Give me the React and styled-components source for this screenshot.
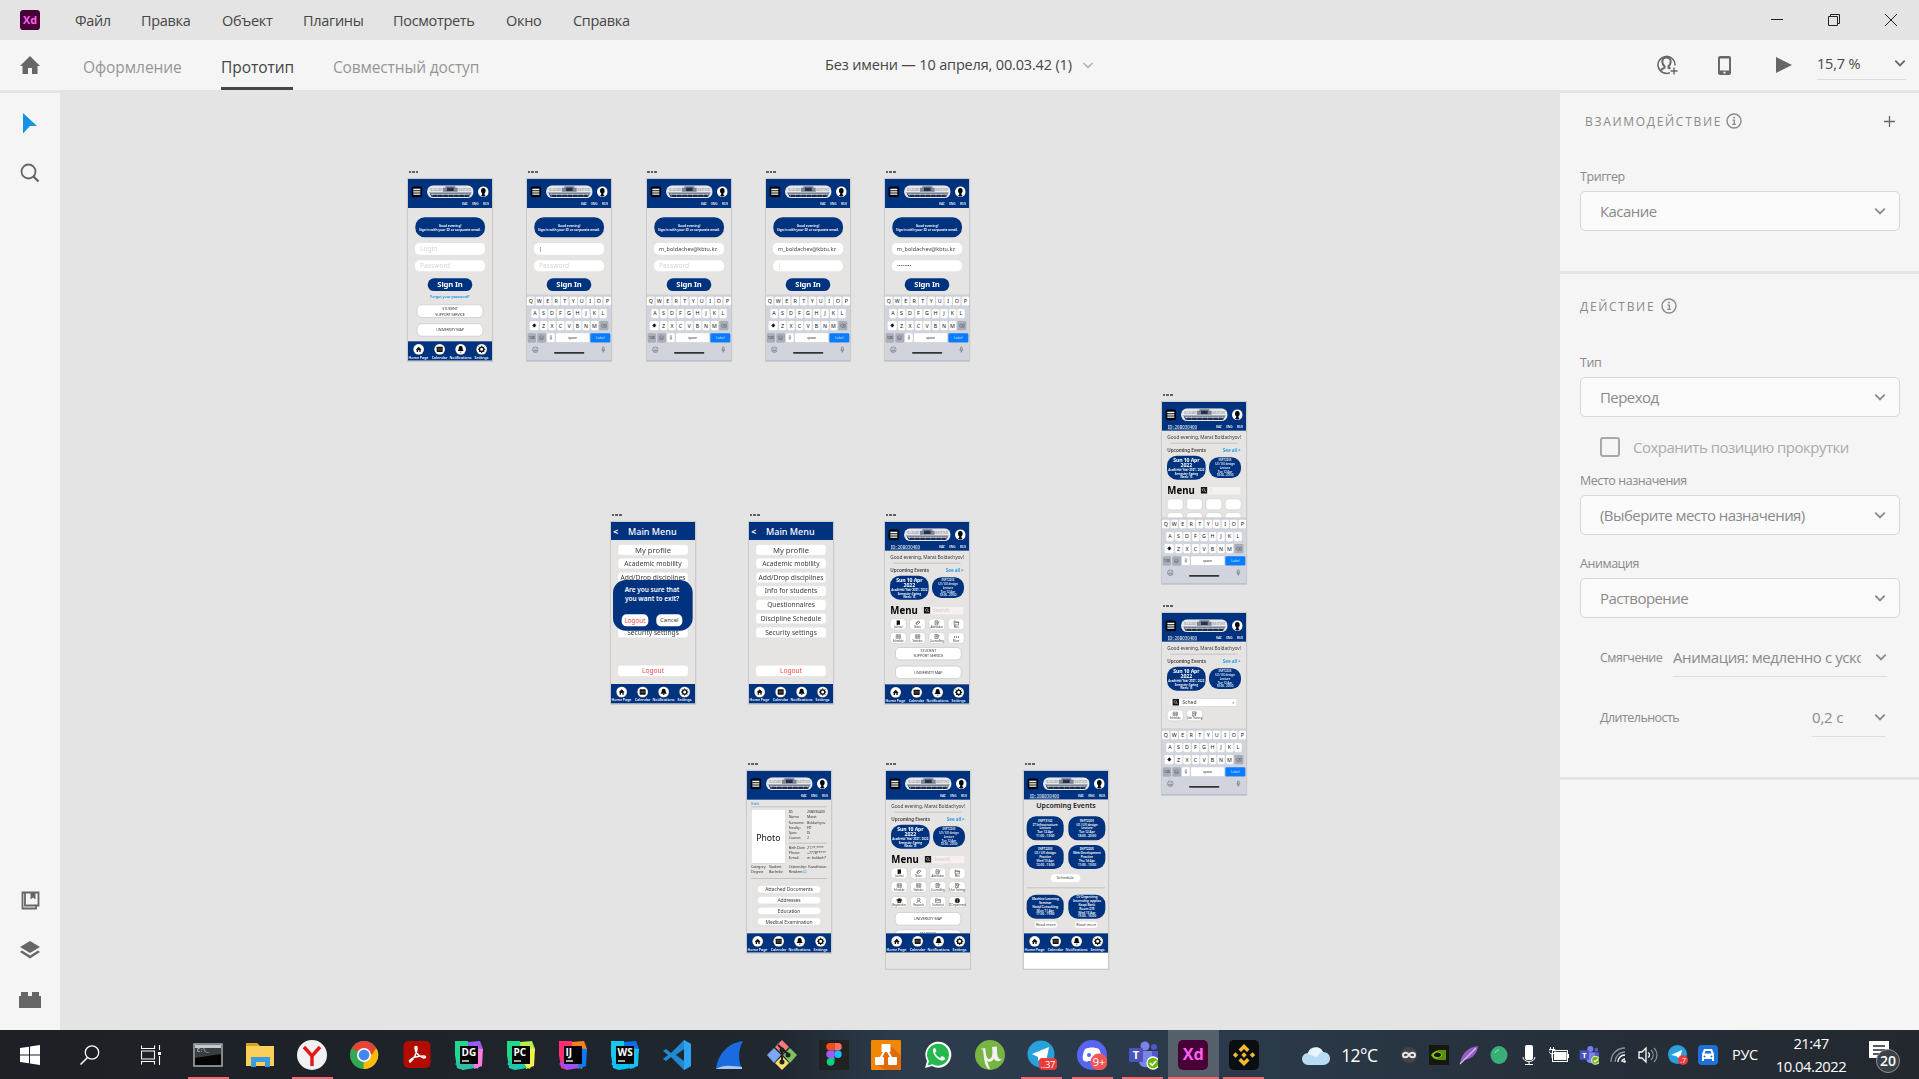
import React from 'react';
import styled, { createGlobalStyle, css } from 'styled-components';

const Global = createGlobalStyle`
  * { box-sizing: border-box; }
  body { margin: 0; background: #e4e4e4; overflow: hidden; }
  #root { font-family: "Open Sans", "Noto Sans", sans-serif; color: #464646; }
  svg { display: block; flex: none; }
`;

const Window = styled.div`
  width: 1919px;
  height: 1079px;
  display: flex;
  flex-direction: column;
  background: #e4e4e4;
`;

/* ---------- title bar ---------- */
const TitleBar = styled.header`
  height: 40px;
  display: flex;
  align-items: center;
  padding-left: 20px;
`;
const XdBadge = styled.div`
  width: ${(p) => p.$size}px;
  height: ${(p) => p.$size}px;
  border-radius: ${(p) => p.$size / 6}px;
  background: #470137;
  color: #ff61f6;
  font-size: ${(p) => p.$size * 0.54}px;
  font-weight: 700;
  display: flex;
  align-items: center;
  justify-content: center;
  line-height: 1;
`;
const MenuBar = styled.nav`
  display: flex;
  margin-left: 35px;
  padding-top: 2px;
  gap: 31px;
`;
const MenuItem = styled.span`
  font-size: 14.5px;
  letter-spacing: ${(p) => p.$track || 0}px;
  width: ${(p) => p.$w}px;
  white-space: nowrap;
  line-height: 20px;
`;
const WindowButtons = styled.div`
  margin-left: auto;
  padding-right: 21px;
  display: flex;
  gap: 43px;
`;

/* ---------- toolbar ---------- */
const Toolbar = styled.div`
  height: 50px;
  background: #f5f5f5;
  display: flex;
  align-items: center;
  padding-left: 20px;
`;
const Tabs = styled.div`
  display: flex;
  height: 50px;
  margin-left: 43px;
  gap: 40px;
`;
const Tab = styled.span`
  width: ${(p) => p.$w}px;
  font-size: 15.5px;
  letter-spacing: ${(p) => p.$track || 0}px;
  line-height: 54px;
  height: 50px;
  white-space: nowrap;
  color: ${(p) => (p.$on ? '#464646' : '#959595')};
  border-bottom: 3px solid ${(p) => (p.$on ? '#464646' : 'transparent')};
`;
const DocTitle = styled.div`
  margin-left: 346px;
  width: 263px;
  display: flex;
  align-items: center;
  justify-content: space-between;
  font-size: 14.5px;
  letter-spacing: -0.16px;
  white-space: nowrap;
  line-height: 52px;
  & > svg { margin-right: -6px; }
`;
const ToolbarRight = styled.div`
  margin-left: auto;
  display: flex;
  align-items: center;
  height: 50px;
`;
const Share = styled.div`margin-right: 40px;`;
const Device = styled.div`margin-right: 45px;`;
const Play = styled.div`margin-right: 25px;`;
const Zoom = styled.div`
  width: 89px;
  height: 30px;
  margin-right: 13px;
  border-bottom: 1px solid #dcdcdc;
  display: flex;
  align-items: center;
  justify-content: space-between;
  font-size: 14.5px;
  letter-spacing: -0.2px;
  padding-bottom: 3px;
`;

/* ---------- work area ---------- */
const Work = styled.div`
  height: 940px;
  padding-top: 3px;
  display: flex;
`;
const ToolRail = styled.aside`
  width: 60px;
  background: #f5f5f5;
  display: flex;
  flex-direction: column;
  align-items: center;
  padding: 20px 0 20px;
`;
const Spacer = styled.div`flex: 1;`;
const Tool = styled.div`
  height: 20px;
  margin-bottom: 30px;
  display: flex;
  align-items: center;
  &:last-child { margin-bottom: 0; }
`;
const Canvas = styled.main`
  position: relative;
  width: 1500px;
  overflow: hidden;
`;

/* ---------- property inspector ---------- */
const Inspector = styled.aside`
  width: 359px;
  background: #f5f5f5;
  color: #8a8a8a;
`;
const Section = styled.section`
  height: ${(p) => p.$h}px;
  border-bottom: 3px solid #e4e4e4;
  padding: 0 19px 0 20px;
  display: flex;
  flex-direction: column;
`;
const SectionHead = styled.div`
  margin-top: ${(p) => p.$mt}px;
  padding-left: ${(p) => p.$indent || 0}px;
  height: 20px;
  display: flex;
  align-items: center;
  gap: 9.5px;
  padding-right: 5px;
`;
const SectionTitle = styled.h2`
  margin: 0;
  width: ${(p) => p.$w}px;
  font-size: 12px;
  font-weight: 400;
  letter-spacing: ${(p) => p.$track}px;
  white-space: nowrap;
`;
const PlusSlot = styled.div`margin-left: auto;`;
const FieldLabel = styled.label`
  font-size: 12.5px;
  letter-spacing: -0.45px;
  line-height: 18px;
  margin-top: ${(p) => p.$mt}px;
  margin-bottom: 5px;
`;
const Select = styled.div`
  height: 40px;
  border: 1px solid #d8d8d8;
  border-radius: 5px;
  background: #fafafa;
  display: flex;
  align-items: center;
  justify-content: space-between;
  padding: 0 13px 0 19px;
  font-size: 15px;
  letter-spacing: -0.56px;
  line-height: 24px;
`;
const CheckRow = styled.div`
  display: flex;
  align-items: center;
  height: 22px;
  margin-top: 19px;
  padding-left: 20px;
  gap: 13px;
  color: #ababab;
  font-size: 15px;
  letter-spacing: -0.5px;
  white-space: nowrap;
`;
const Box = styled.span`
  width: 20px;
  height: 20px;
  border: 2px solid #a8a8a8;
  border-radius: 3px;
`;
const InlineRow = styled.div`
  display: flex;
  justify-content: space-between;
  height: 39px;
  margin-top: ${(p) => p.$mt}px;
  padding: 0 ${(p) => p.$pr}px 0 20px;
  font-size: 12.5px;
  letter-spacing: ${(p) => p.$track}px;
  line-height: 39px;
`;
const InlineValue = styled.div`
  width: ${(p) => p.$w}px;
  border-bottom: 1px solid #dedede;
  display: flex;
  align-items: center;
  justify-content: space-between;
  font-size: 15px;
  letter-spacing: ${(p) => p.$track}px;
`;
const Clip = styled.span`
  width: ${(p) => p.$w}px;
  overflow: hidden;
  white-space: nowrap;
`;

const Chevron = ({ color = '#8a8a8a', w = 1.9, s = 12 }) => (
  <svg width={s} height={s} viewBox="0 0 12 12" fill="none" stroke={color} strokeWidth={w} strokeLinecap="round">
    <path d="M1.8 4.2 6 8.4l4.2-4.2" />
  </svg>
);
const Info = () => (
  <svg width="16" height="16" viewBox="0 0 16 16" fill="none" stroke="#8a8a8a">
    <circle cx="8" cy="8" r="7" strokeWidth="1.4" />
    <path d="M6.5 7.2H8.3V11.3M6.3 11.4H9.8" strokeWidth="1.3" />
    <circle cx="8" cy="4.6" r="0.6" fill="#8a8a8a" />
  </svg>
);

/* ---------- artboards ---------- */
const Board = styled.div`
  position: absolute;
  left: ${(p) => p.$x - 60}px;
  top: ${(p) => p.$y - 93}px;
`;
const BoardLabel = styled.div`
  position: absolute;
  left: 0.5px;
  top: -8px;
  display: flex;
  gap: 1px;
`;
const Pip = styled.i`
  width: 2.6px;
  height: 2.4px;
  background: #606060;
`;
const Frame = styled.div`
  width: 252px;
  height: ${(p) => p.$h || 545}px;
  transform: scale(0.33333);
  transform-origin: 0 0;
  background: ${(p) => p.$bg || '#e5e4e2'};
  box-shadow: 0 0 0 4px #cbcbcb;
  overflow: hidden;
  display: flex;
  flex-direction: column;
  color: #3c3c3c;
  font-family: "Noto Sans", "Open Sans", sans-serif;
`;
const Body = styled.div`
  flex: none;
  height: ${(p) => p.$h}px;
  overflow: hidden;
  display: flex;
  flex-direction: column;
`;
const Head = styled.div`
  flex: none;
  height: ${(p) => p.$h}px;
  background: #00337f;
  padding: 19px 10px 0 10px;
`;
const HeadRow = styled.div`
  display: flex;
  align-items: center;
  justify-content: space-between;
  height: 38px;
`;
const HeadSub = styled.div`
  display: flex;
  align-items: center;
  margin-top: 9px;
  height: 18px;
  padding-left: 7px;
  color: #d5deec;
  font-size: 10px;
  font-weight: 700;
`;
const UserId = styled.span`
  font-size: 13.5px;
  text-decoration: underline;
  white-space: nowrap;
  color: #b4c0d6;
  letter-spacing: -0.4px;
`;
const Langs = styled.div`
  margin-left: auto;
  width: 80px;
  display: flex;
  justify-content: space-between;
  letter-spacing: -1px;
`;
const Pill = styled.div`
  flex: none;
  align-self: center;
  margin-left: ${(p) => p.$ml || 0}px;
  margin-top: ${(p) => p.$mt || 0}px;
  width: ${(p) => p.$w}px;
  height: ${(p) => p.$h}px;
  border-radius: ${(p) => p.$r || 14}px;
  background: ${(p) => p.$bg || '#fff'};
  color: ${(p) => p.$c || '#3c3c3c'};
  font-size: ${(p) => p.$fs || 12}px;
  font-weight: ${(p) => p.$fw || 400};
  letter-spacing: ${(p) => p.$track || 0}px;
  line-height: ${(p) => p.$lh || 1.2};
  display: flex;
  flex-direction: column;
  align-items: ${(p) => (p.$left ? 'flex-start' : 'center')};
  justify-content: center;
  text-align: center;
  white-space: nowrap;
  padding: 0 ${(p) => (p.$left ? 15 : 0)}px;
  ${(p) => p.$line && css`border: 1.5px solid ${p.$line};`}
`;
const Line = styled.div`
  flex: none;
  height: 20px;
  margin-top: ${(p) => p.$mt || 0}px;
  padding: 0 ${(p) => p.$px || 16}px;
  display: flex;
  align-items: center;
  justify-content: ${(p) => p.$j || 'center'};
  font-size: ${(p) => p.$fs}px;
  font-weight: ${(p) => p.$fw || 400};
  letter-spacing: ${(p) => p.$track || 0}px;
  color: ${(p) => p.$c || '#3c3c3c'};
  white-space: nowrap;
`;
const Blue = styled.span`color: #1a93e8;`;
const Rule = styled.div`
  flex: none;
  height: 3px;
  background: #c2c2c0;
  margin: ${(p) => p.$mt || 0}px ${(p) => p.$mx || 12}px ${(p) => p.$mb || 0}px;
`;
const Foot = styled.div`
  flex: none;
  height: 58px;
  background: #00337f;
  display: flex;
  justify-content: space-around;
  padding: 7px 0 0;
`;
const FootItem = styled.div`
  width: 62px;
  display: flex;
  flex-direction: column;
  align-items: center;
  color: #eef2f8;
  font-size: 11px;
  font-weight: 600;
  line-height: 13px;
  letter-spacing: -0.2px;
  white-space: nowrap;
`;
const Cards = styled.div`
  flex: none;
  display: flex;
  justify-content: space-between;
  align-items: center;
  margin-top: ${(p) => p.$mt}px;
  padding: 0 ${(p) => p.$px || 15}px;
`;
const SearchField = styled.div`
  width: 97px;
  height: 23px;
  background: #f8efef;
  color: #ddd5d5;
  font-size: 15px;
  font-weight: 700;
  line-height: 22px;
  padding-left: 5px;
`;
const MenuTitle = styled.span`
  font-size: 29px;
  font-weight: 700;
  color: #000;
  width: 98px;
  line-height: 30px;
`;
const MenuRow = styled.div`
  flex: none;
  display: flex;
  align-items: center;
  height: 30px;
  margin-top: 17px;
  padding-left: 16px;
  gap: 2px;
`;
const Tiles = styled.div`
  flex: none;
  display: flex;
  gap: 9px;
  margin-top: ${(p) => p.$mt}px;
  padding-left: 15px;
`;
const Tile = styled.div`
  width: 49px;
  height: 34px;
  border-radius: 11px;
  border: 1.5px solid #aeaeac;
  background: #fff;
  display: flex;
  flex-direction: column;
  align-items: center;
  justify-content: center;
  font-size: 8px;
  line-height: 9px;
  white-space: nowrap;
  letter-spacing: -0.3px;
`;
const SearchBar = styled.div`
  flex: none;
  margin: 22px 0 0 23px;
  width: 203px;
  height: 26px;
  border: 2px solid #cfcfcf;
  background: #fff;
  display: flex;
  align-items: center;
  gap: 10px;
  padding: 0 6px;
  font-size: 15px;
`;
const Times = styled.span`margin-left: auto; font-size: 12px;`;

const Keyboard = styled.div`
  flex: none;
  height: 198px;
  background: #d1d4dc;
  border-top: 2px solid #c6c9d0;
  border-bottom: 2px solid #97a4c4;
  padding-top: 4px;
  display: flex;
  flex-direction: column;
`;
const KeyRow = styled.div`
  display: flex;
  justify-content: center;
  gap: 3.5px;
  margin-bottom: 8.5px;
`;
const Key = styled.div`
  width: ${(p) => p.$w || 22}px;
  height: 28px;
  border-radius: 4px;
  background: ${(p) => p.$bg || '#fff'};
  color: ${(p) => p.$c || '#111'};
  font-size: ${(p) => p.$fs || 16}px;
  border-bottom: 1.5px solid #a9acb4;
  display: flex;
  align-items: center;
  justify-content: center;
`;
const KeyFoot = styled.div`
  display: flex;
  justify-content: space-between;
  padding: 3px 17px 0 15px;
`;
const HomeBar = styled.div`
  width: 91px;
  height: 5px;
  border-radius: 3px;
  background: #333;
  align-self: center;
  margin-top: -3px;
`;
const MenuHead = styled.div`
  flex: none;
  height: 54px;
  background: #00337f;
  color: #fff;
  display: flex;
  align-items: center;
  padding: 4px 0 0 7px;
  font-size: 27px;
  font-weight: 500;
  white-space: nowrap;
`;
const Back = styled.span`width: 44px; font-weight: 700; font-size: 26px;`;
const MenuStack = styled.div`
  display: flex;
  flex-direction: column;
  gap: 8.3px;
  padding-top: 13px;
`;
const Modal = styled.div`
  position: absolute;
  left: 6px;
  top: 174px;
  width: 239px;
  height: 152px;
  border-radius: 38px;
  background: #00337f;
  color: #fff;
  font-size: 19.5px;
  font-weight: 600;
  line-height: 27px;
  text-align: center;
  padding: 16px 31px 0 26px;
`;
const ModalButtons = styled.div`
  display: flex;
  justify-content: space-between;
  margin-top: 33px;
`;
const Profile = styled.div`
  flex: none;
  display: flex;
  gap: 9px;
  padding: 0 12px;
  margin-top: 6px;
`;
const Photo = styled.div`
  width: 104px;
  height: 162px;
  background: #fff;
  border: 1.5px solid #b5b5b5;
  color: #111;
  font-size: 26px;
  display: flex;
  align-items: center;
  justify-content: center;
  padding-top: 8px;
`;
const Facts = styled.div`
  flex: 1;
  display: flex;
  flex-direction: column;
`;
const Fact = styled.div`
  display: grid;
  grid-template-columns: ${(p) => p.$cols || '55px 1fr'};
  height: 15.3px;
  line-height: 15px;
  font-size: 11px;
  letter-spacing: -0.5px;
  white-space: nowrap;
`;
const FactPad = styled.div`flex: none; padding: 1px 12px 0;`;

const Stripe = () => (
  <svg width="140" height="38" viewBox="0 0 140 38">
    <rect width="140" height="38" rx="19" fill="#e6e7ea" />
    <path d="M8 24h124l-6 11H14z" fill="#1d2b4a" />
    <path d="M6 20h128v4H6z" fill="#aab0bd" />
    <path d="M16 20v14M32 20v14M48 20v14M64 20v14M80 20v14M96 20v14M112 20v14M126 20v14" stroke="#9aa2b2" strokeWidth="1.5" />
    <path d="M12 27h116" stroke="#dfe1e6" strokeWidth="2.5" />
    <path d="M48 7h7V3h30v4h7v12H48z" fill="#7b8394" />
    <rect x="60" y="7" width="20" height="10" fill="#26324c" />
    <text x="28" y="17" fontSize="9" fontFamily="Liberation Serif" fill="#777" textAnchor="middle" textLength="36">KAZAKH</text>
    <text x="113" y="17" fontSize="9" fontFamily="Liberation Serif" fill="#777" textAnchor="middle" textLength="38">BRITISH</text>
  </svg>
);
const Burger = () => (
  <svg width="33" height="33" viewBox="0 0 33 33">
    <rect width="33" height="33" rx="8" fill="#02040a" />
    <path d="M6 9.500h21M6 16.500h21M6 23.500h21" stroke="#fff" strokeWidth="3.800" />
  </svg>
);
const Avatar = () => (
  <svg width="32" height="32" viewBox="0 0 32 32">
    <circle cx="16" cy="16" r="16" fill="#fff" />
    <path d="M16 5c5 0 7 4 7 8 0 4-2 7-3.500 8v4c3 1 3 2 2 4-4 2-7 2-11 0-1-2-1-3 2-4v-4C11 20 9 17 9 13c0-4 2-8 7-8z" fill="#05070c" />
  </svg>
);
const Magnifier = () => (
  <svg width="20" height="20" viewBox="0 0 20 20">
    <rect width="20" height="20" fill="#151515" />
    <circle cx="9" cy="8.500" r="4" fill="none" stroke="#ddd" strokeWidth="1.600" />
    <path d="m12 11.500 4 4" stroke="#ddd" strokeWidth="2" />
  </svg>
);

const Header = ({ id, h = 87 }) => (
  <Head $h={h}>
    <HeadRow><Burger /><Stripe /><Avatar /></HeadRow>
    <HeadSub>
      {id && <UserId>ID: 20B030400</UserId>}
      <Langs><span>KAZ</span><span>ENG</span><span>RUS</span></Langs>
    </HeadSub>
  </Head>
);

const footIcons = {
  home: <path d="M8 18 17 9l9 9h-3v7h-4v-5h-4v5h-4v-7z" fill="#111" />,
  cal: <g><rect x="8" y="9" width="18" height="16" rx="2" fill="#111" /><path d="M11 15h12M11 19h12" stroke="#888" strokeWidth="1.500" /></g>,
  bell: <path d="M17 7c5 0 6 4 6 8 0 3 2 5 3 7H8c1-2 3-4 3-7 0-4 1-8 6-8zM14 24h6c0 3-6 3-6 0z" fill="#050505" />,
  gear: <g><circle cx="17" cy="17" r="6.500" fill="none" stroke="#111" strokeWidth="4" /><path d="M17 6v4M17 24v4M6 17h4M24 17h4M9 9l3 3M22 22l3 3M25 9l-3 3M12 22l-3 3" stroke="#111" strokeWidth="3" /></g>,
};
const Footer = () => (
  <Foot>
    {[['home', 'Home Page'], ['cal', 'Calendar'], ['bell', 'Notifications'], ['gear', 'Settings']].map(([k, t]) => (
      <FootItem key={k}>
        <svg width="34" height="34" viewBox="0 0 34 34"><circle cx="17" cy="17" r="16.500" fill="#fff" stroke="#111" />{footIcons[k]}</svg>
        {t}
      </FootItem>
    ))}
  </Foot>
);

const Smile = ({ s = 20 }) => (
  <svg width={s} height={s} viewBox="0 0 20 20" fill="none" stroke="#5b5e66" strokeWidth="1.600">
    <circle cx="10" cy="10" r="8.500" /><path d="M5 11.500c2 4.500 8 4.500 10 0zM7 6v2M13 6v2" />
  </svg>
);
const MicKey = ({ s = 20 }) => (
  <svg width={s * 0.6} height={s} viewBox="0 0 12 20" fill="none" stroke="#555" strokeWidth="1.600">
    <rect x="3.500" y="1.500" width="5" height="10" rx="2.500" /><path d="M1 9c0 7 10 7 10 0M6 14v5" />
  </svg>
);
const Keys = () => (
  <Keyboard>
    <KeyRow>{'QWERTYUIOP'.split('').map((k) => <Key key={k}>{k}</Key>)}</KeyRow>
    <KeyRow>{'ASDFGHJKL'.split('').map((k) => <Key key={k}>{k}</Key>)}</KeyRow>
    <KeyRow>
      <Key $w={27}><svg width="14" height="13" viewBox="0 0 14 13"><path d="M7 0l7 7h-4v5H4V7H0z" fill="#111" /></svg></Key>
      {'ZXCVBNM'.split('').map((k) => <Key key={k}>{k}</Key>)}
      <Key $w={27} $bg="#a9adb8"><svg width="17" height="12" viewBox="0 0 17 12" fill="none" stroke="#444" strokeWidth="1.400"><path d="M5 1h11v10H5L1 6zM8 4l5 4M13 4 8 8" /></svg></Key>
    </KeyRow>
    <KeyRow>
      <Key $w={25} $bg="#a9adb8" $fs={10}>123</Key>
      <Key $w={26} $bg="#a9adb8"><Smile s={15} /></Key>
      <Key $w={23}><MicKey s={16} /></Key>
      <Key $w={100} $fs={10}>space</Key>
      <Key $w={60} $bg="#0a7cff" $c="#cfe4ff" $fs={10}>Label</Key>
    </KeyRow>
    <KeyFoot><Smile /><MicKey /></KeyFoot>
    <HomeBar />
  </Keyboard>
);

const Artboard = ({ x, y, h, bg, children }) => (
  <Board $x={x} $y={y}>
    <BoardLabel><Pip /><Pip /><Pip /></BoardLabel>
    <Frame $h={h} $bg={bg}>{children}</Frame>
  </Board>
);

const Login = ({ x, login, pass, dim, keyboard }) => (
  <Artboard x={x} y={179}>
    <Header />
    <Body $h={keyboard ? 260 : 400}>
      <Pill $mt={28} $w={209} $h={60} $r={28} $bg="#00337f" $c="#e8edf6" $fs={10} $fw={700} $track={-0.25}>
        <span>Good evening!</span><span>Sign in with your ID or corporate email.</span>
      </Pill>
      <Pill $mt={17} $w={210} $h={35} $left $c={dim && dim[0] ? '#d6d6d6' : '#3c3c3c'} $fs={login === 'Login' ? 20 : 16} $track={login.length > 9 ? 0.35 : 0}>
        {login}
      </Pill>
      <Pill $mt={17} $w={210} $h={33} $left $c={dim && dim[1] ? '#d6d6d6' : '#222'} $fs={20}>{pass}</Pill>
      <Pill $mt={21} $w={134} $h={38} $r={19} $bg="#00337f" $c="#fff" $fs={23} $fw={700} $track={-0.4}>Sign In</Pill>
      {!keyboard && (
        <>
          <Line $mt={7} $fs={11} $fw={600} $track={-0.2}><Blue>Forgot your password?</Blue></Line>
          <Pill $mt={14} $w={198} $h={39} $line="#999" $fs={11} $lh={1.6} $track={-0.4}><span>STUDENT</span><span>SUPPORT SERVICE</span></Pill>
          <Pill $mt={18} $w={198} $h={38} $line="#999" $fs={11} $track={-0.4}>UNIVERSITY MAP</Pill>
        </>
      )}
    </Body>
    {keyboard ? <Keys /> : <Footer />}
  </Artboard>
);

const items = ['My profile', 'Academic mobility', 'Add/Drop disciplines', 'Info for students', 'Questionnaires', 'Discipline Schedule', 'Security settings'];
const MainMenu = ({ x, modal }) => (
  <Artboard x={x} y={522}>
    <MenuHead><Back>&lt;</Back>Main Menu</MenuHead>
    <Body $h={432}>
      <MenuStack>
        {items.map((t, i) => <Pill key={t} $w={212} $h={33} $r={10} $fs={i ? 20 : 23} $line="#d6d6d4">{t}</Pill>)}
      </MenuStack>
      <Pill $mt={81} $w={212} $h={35} $r={10} $fs={20} $c="#f04848" $line="#d6d6d4">Logout</Pill>
    </Body>
    <Footer />
    {modal && (
      <Modal>
        Are you sure that<br />you want to exit?
        <ModalButtons>
          <Pill $w={80} $h={36} $fs={19} $c="#f04848">Logout</Pill>
          <Pill $w={78} $h={36} $fs={18}>Cancel</Pill>
        </ModalButtons>
      </Modal>
    )}
  </Artboard>
);

const tileInk = { width: 18, height: 16, viewBox: '0 0 18 16', fill: 'none', stroke: '#444', strokeWidth: 1.8 };
const tileArt = {
  book: <svg {...tileInk}><path d="M4 0h10v15l-3-3-3 3H4z" fill="#111" stroke="none" /></svg>,
  clip: <svg {...tileInk}><path d="m4 11 8-8 4 2-8 8zM2 9l9-7" /></svg>,
  note: <svg {...tileInk}><path d="M3 1h9v13H3zM5 5h5M5 8h4M9 11l7-8" /></svg>,
  folder: <svg {...tileInk}><path d="M2 14V2h5l2 3h7v9zM2 7h14" /></svg>,
  grid: <svg {...tileInk} stroke="#777"><path d="M2 2h14v11H2zM2 6h14M2 9h14M6 2v11M12 2v11" /></svg>,
  more: <svg {...tileInk}><path d="M2 9h3M8 9h3M14 9h3" strokeWidth="3.500" stroke="#111" /></svg>,
  person: <svg {...tileInk}><circle cx="9" cy="5" r="4" /><path d="M3 15c0-7 12-7 12 0" /></svg>,
  cap: <svg {...tileInk}><path d="m0 6 9-5 9 5-9 5zM4 9v5h10V9" fill="#111" /></svg>,
  info: <svg {...tileInk}><circle cx="9" cy="8" r="7" fill="#111" /><path d="M9 7v5M9 3v2" stroke="#fff" /></svg>,
};
const rows = [
  [['book', 'Journal'], ['clip', 'News'], ['note', 'Attestation'], ['folder', 'Files']],
  [['grid', 'Schedule'], ['grid', 'Statistics'], ['note', 'Counselling'], ['more', 'More']],
];
const tallRows = [
  rows[0],
  [['grid', 'Schedule'], ['grid', 'Statistics'], ['note', 'Counselling'], ['note', 'User Training']],
  [['cap', 'Registration'], ['person', 'Requests'], ['folder', 'Transcript'], ['info', 'IT Department']],
];
const TileRow = ({ row, mt, blank }) => (
  <Tiles $mt={mt}>
    {row.map(([k, t]) => <Tile key={t}>{!blank && <>{tileArt[k]}<span>{t}</span></>}</Tile>)}
  </Tiles>
);

const Big = styled.span`
  font-size: 15.5px;
  font-weight: 700;
  line-height: 17px;
  border-bottom: 1px solid #8ea4c8;
`;
const Home = ({ x, y, h, tall, mode }) => (
  <Artboard x={x} y={y} h={h}>
    <Header id={!tall} h={86} />
    <Body $h={mode ? 261 : 401}>
      <Line $mt={10} $fs={14.300} $j="space-between" $track={-0.15}>Good evening, Marat Boldachyov!</Line>
      <Rule $mt={6} $mx={25} />
      <Line $mt={8} $fs={14} $fw={600} $j="space-between" $track={-0.2}><span>Upcoming Events</span><Blue>See all &gt;</Blue></Line>
      <Cards $mt={8}>
        <Pill $w={116} $h={72} $r={30} $bg="#00337f" $c="#fff" $fs={9} $fw={600} $track={-0.3} $lh={1.1}>
          <Big>Sun 10 Apr<br />2022</Big>
          <span>Academic Year 2021 - 2022</span><span>Semester: Spring</span><span>Week: 13</span>
        </Pill>
        <Pill $w={96} $h={62} $r={28} $bg="#00337f" $c="#dfe6f2" $fs={9} $fw={600} $track={-0.3} $lh={1.25}>
          <span>INFT2203</span><span>UI / UX design</span><span>Lecture</span><span>Tue 12 Apr</span><span>18:00 - 20:00</span>
        </Pill>
      </Cards>
      {mode === 'results' ? (
        <>
          <SearchBar><Magnifier />Sched<Times>×</Times></SearchBar>
          <TileRow mt={9} row={[['grid', 'Schedule'], ['note', 'User Training']]} />
        </>
      ) : (
        <>
          <MenuRow><MenuTitle>Menu</MenuTitle><Magnifier /><SearchField>{mode ? '|' : 'Search'}</SearchField></MenuRow>
          {(tall ? tallRows : rows).map((r, i) => <TileRow key={i} row={r} mt={[10, 7, 11][i]} blank={mode === 'typing'} />)}
          {!mode && !tall && (
            <>
              <Pill $mt={11} $w={198} $h={38} $line="#999" $ml={8} $fs={11} $lh={1.35} $track={-0.3}><span>STUDENT</span><span>SUPPORT SERVICE</span></Pill>
              <Pill $mt={18} $w={198} $h={38} $line="#999" $ml={8} $fs={11} $track={-0.3}>UNIVERSITY MAP</Pill>
            </>
          )}
          {tall && (
            <>
              <Pill $mt={14} $w={198} $h={39} $line="#999" $fs={11} $track={-0.3}>UNIVERSITY MAP</Pill>
              <Pill $mt={13} $w={198} $h={39} $line="#999" $fs={11}><span>STUDENT</span><span>SUPPORT SERVICE</span></Pill>
            </>
          )}
        </>
      )}
    </Body>
    {mode ? <Keys /> : <Footer />}
  </Artboard>
);

const ProfilePage = () => (
  <Artboard x={747.3} y={771}>
    <Header h={86} />
    <Body $h={401}>
      <Line $fs={13} $px={13} $j="flex-start"><Blue>Edit</Blue></Line>
      <Rule />
      <Profile>
        <Photo>Photo</Photo>
        <Facts>
          <Fact><span>ID:</span><span>20B030400</span></Fact>
          <Fact><span>Name:</span><span>Marat</span></Fact>
          <Fact><span>Surname:</span><span>Boldachyov</span></Fact>
          <Fact><span>Faculty:</span><span>FIT</span></Fact>
          <Fact><span>Spec:</span><span>IS</span></Fact>
          <Fact><span>Course:</span><span>2</span></Fact>
          <Rule $mt={8} $mx={0.1} $mb={5} />
          <Fact><span>Birth Date:</span><span>21.**.****</span></Fact>
          <Fact><span>Phone:</span><span>+7778*****</span></Fact>
          <Fact><span>E-mail:</span><span>m_boldach*</span></Fact>
        </Facts>
      </Profile>
      <FactPad>
        <Fact $cols="54px 59px 59px 1fr"><span>Category:</span><span>Student</span><span>Citizenship:</span><span>Kazakhstan</span></Fact>
        <Fact $cols="54px 59px 42px 1fr"><span>Degree:</span><span>Bachelor</span><span>Resident</span><Blue>☑</Blue></Fact>
      </FactPad>
      <Rule $mt={12} />
      {['Attached Documents', 'Addresses', 'Education', 'Medical Examination'].map((t, i) => (
        <Pill key={t} $mt={i ? 9.300 : 20} $w={191} $h={23} $r={12} $fs={15} $track={-0.3} $line="#d2d2d0">{t}</Pill>
      ))}
    </Body>
    <Footer />
  </Artboard>
);

const EventCard = ({ lines }) => (
  <Pill $w={111} $h={72} $r={28} $bg="#00337f" $c="#eef2f8" $fs={10} $fw={600} $track={-0.4} $lh={1.15}>
    {lines.map((l) => <span key={l}>{l}</span>)}
  </Pill>
);
const EventsBody = styled(Body)`background: #e5e4e2;`;
const EventsPage = () => (
  <Artboard x={1024.3} y={771} h={593} bg="#fff">
    <Header id h={86} />
    <EventsBody $h={401}>
      <Line $mt={8} $fs={21} $fw={600} $c="#222">Upcoming Events</Line>
      <Cards $mt={22} $px={8}>
        <EventCard lines={['INFT3102', 'IT Infrastructure', 'Lecture', 'Tue 12 Apr', '11:00 - 13:00']} />
        <EventCard lines={['INFT2203', 'UI / UX design', 'Lecture', 'Tue 12 Apr', '18:00 - 20:00']} />
      </Cards>
      <Cards $mt={14} $px={8}>
        <EventCard lines={['INFT2203', 'UI / UX design', 'Practice', 'Wed 13 Apr', '12:00 - 13:00']} />
        <EventCard lines={['INFT2205', 'Web Development', 'Practice', 'Thu 14 Apr', '11:00 - 13:00']} />
      </Cards>
      <Pill $mt={14} $ml={-4} $w={93} $h={27} $line="#ccc" $fs={12}>Schedule</Pill>
      <Rule $mt={14} $mx={9} />
      <Cards $mt={19} $px={8}>
        <EventCard lines={['Machine Learning', 'Seminar', 'Naiqil Consulting', 'Mon 11 Apr', '17:00 - 19:00']} />
        <EventCard lines={['CV Organizing', 'Internship, applies', 'Kaspi Bank', 'Room 278', 'Wed 13 Apr', '15:00 - 16:00']} />
      </Cards>
      <Cards $mt={7} $px={30}>
        <Pill $w={71} $h={22} $line="#ccc" $fs={12} $track={-0.2}>Read more</Pill>
        <Pill $w={71} $h={22} $line="#ccc" $fs={12} $track={-0.2}>Read more</Pill>
      </Cards>
    </EventsBody>
    <Footer />
  </Artboard>
);

/* ---------- taskbar ---------- */
const TaskBar = styled.footer`
  height: 49px;
  display: flex;
  color: #fff;
  background: linear-gradient(90deg, #1d2126 0, #1e2329 400px, #20272f 780px, #2d3c4c 900px, #2b3a4a 1250px, #26303b 1550px, #23282e 1919px);
`;
const Slot = styled.div`
  width: ${(p) => p.$w}px;
  height: 49px;
  display: flex;
  align-items: center;
  justify-content: center;
  background: ${(p) => (p.$on ? '#56606b' : 'transparent')};
  ${(p) => p.$run && css`
    background-image: linear-gradient(#ee6a73, #ee6a73);
    background-size: ${p.$on ? '100%' : '41px'} 2px;
    background-position: bottom;
    background-repeat: no-repeat;
  `}
`;
const Tray = styled.div`
  display: flex;
  align-items: center;
  margin-left: 33px;
`;
const Weather = styled.div`
  width: 92px;
  display: flex;
  align-items: center;
  gap: 11px;
  font-size: 17.5px;
  letter-spacing: -0.6px;
  padding-top: 1px;
`;
const TrayCell = styled.div`
  width: 29.9px;
  display: flex;
  justify-content: center;
`;
const Lang = styled.span`
  margin-left: 9px;
  width: 41px;
  font-size: 14.5px;
  letter-spacing: -0.3px;
`;
const Clock = styled.div`
  width: 76px;
  text-align: center;
  font-size: 14.8px;
  letter-spacing: -0.5px;
  line-height: 23px;
  white-space: nowrap;
`;
const Notice = styled.div`
  margin-left: 18px;
  width: 46px;
`;

const jet = {
  DG: ['#22d88f', '#9b5cf5', '#fa7ae0', '#2cc0a8'],
  PC: ['#21d789', '#b8f04a', '#f6f04a', '#20c8b0'],
  IJ: ['#fe2d70', '#fc801d', '#0e7cf5', '#a050f0'],
  WS: ['#19c7ee', '#0e70e8', '#18c0f0', '#07c3f2'],
};
const Jet = ({ k }) => (
  <svg width="30" height="30" viewBox="0 0 30 30">
    <path d="M1 1h13l2 14L9 30 3 28 1 15z" fill={jet[k][0]} />
    <path d="M14 2 26 1l3 8-5 20-9-4z" fill={jet[k][1]} />
    <path d="m17 8 12 1-1 17-8 3z" fill={jet[k][2]} />
    <path d="m1 24 12-8 8 12-12 2z" fill={jet[k][3]} />
    <rect x="6" y="6" width="18" height="18" fill="#050505" />
    <text x="7.500" y="15.500" fontSize="10" fontWeight="700" fontFamily="Open Sans" fill="#fff">{k}</text>
    <path d="M8 21h7" stroke="#fff" strokeWidth="1.300" />
  </svg>
);
const I = ({ children, s = 30, v = 30 }) => <svg width={s} height={s} viewBox={`0 0 ${v} ${v}`}>{children}</svg>;

const TeamsMark = () => (
  <>
    <circle cx="17" cy="6" r="4.500" fill="#7b83eb" /><circle cx="26" cy="7" r="3" fill="#5059c9" />
    <path d="M11 11h13v11c0 7-12 7-13 0z" fill="#7b83eb" /><path d="M24 11h6v8c0 5-5 5-6 3z" fill="#5059c9" />
    <rect x="1" y="8" width="14" height="14" rx="1" fill="#4b53bc" />
    <text x="8" y="19" fontSize="11" fontWeight="700" fill="#fff" textAnchor="middle" fontFamily="Open Sans">T</text>
    <circle cx="25" cy="23" r="6" fill="#6bb700" stroke="#fff" strokeWidth="1.300" /><path d="m22 23 2.200 2.300 4-4.300" stroke="#fff" strokeWidth="1.700" fill="none" />
  </>
);

const apps = [
  ['cmd', true, <I><rect x="1" y="4" width="28" height="22" fill="#050505" stroke="#a8b0b6" strokeWidth="1.500" /><path d="M2 5h26v3H2z" fill="#c3c9cd" /><path d="M2 8h26v6L2 18z" fill="#3a3d40" /><text x="4" y="12" fontSize="5" fontFamily="Liberation Mono" fill="#fff">C:\_</text></I>],
  ['files', false, <I><path d="M1 3h11l3 3h14v20H1z" fill="#fbd05a" /><path d="M1 3h11l2 3H1z" fill="#dfa21c" /><path d="M6 27V17h19v10h-5v-5h-9v5z" fill="#3d9be0" /></I>],
  ['yandex', true, <I><circle cx="15" cy="15" r="15" fill="#f1f1f1" /><path d="M7 7 15 16 23 7M15 15v11" stroke="#e01818" strokeWidth="3.400" fill="none" /></I>],
  ['chrome', false, <I><circle cx="15" cy="15" r="14" fill="#34a853" /><path d="M15 15 2.900 8A14 14 0 0 1 27.100 8z" fill="#ea4335" /><path d="M15 15 27.600 8.500A14 14 0 0 1 14.500 29z" fill="#fbbc05" /><path d="M8 8.500h19l-4 6H15z" fill="#ea4335" /><circle cx="15" cy="15" r="7" fill="#fff" /><circle cx="15" cy="15" r="5.400" fill="#4285f4" /></I>],
  ['acrobat', false, <I><rect x="1.500" y="1" width="27" height="27" rx="5" fill="#b30b00" /><path d="M8 22c4-3 7-9 7-14 0-2-2-2-2 0 0 5 5 9 9 10 2 0 2-2 0-2-5 0-11 1-14 4-1 1 0 2 0 2z" fill="none" stroke="#fff" strokeWidth="1.600" /></I>],
  ['dg', false, <Jet k="DG" />],
  ['pc', false, <Jet k="PC" />],
  ['ij', false, <Jet k="IJ" />],
  ['ws', false, <Jet k="WS" />],
  ['code', false, <I><path d="M22 0 29 4v22l-7 4L9 17l-5 4-3-2 5-4-5-4 3-2 5 4z" fill="#1f8ad2" /><path d="M22 9v12l-8-6z" fill="#1f2730" /><path d="M22 0 29 4v22l-7 4z" fill="#2ea3f2" /></I>],
  ['shark', false, <I><path d="M2 29C4 14 14 3 29 1c-5 9-5 19-1 28z" fill="#1a6be0" /><path d="M2 29c8-5 16-3 26-2v2z" fill="#a9c8f2" /></I>],
  ['git', false, <I><path d="M15 0l7 7-7 7-7-7z" fill="#f47b7b" /><path d="M0 15l7-7 7 7-7 8z" fill="#7aa8f5" /><path d="M30 15l-7-7-7 7 7 8z" fill="#7ac35e" /><path d="M15 30l7-7-7-7-7 7z" fill="#f8de6e" /><path d="M11 5 22 15M15 9v15" stroke="#222" strokeWidth="2" /><circle cx="15" cy="10" r="2.500" fill="#222" /><circle cx="21" cy="15" r="2.500" fill="#222" /><circle cx="15" cy="22" r="2.500" fill="#222" /></I>],
  ['figma', false, <I><rect width="30" height="30" fill="#222" /><path d="M11 3h4.500v7.500H11a3.700 3.700 0 0 1 0-7.500z" fill="#f24e1e" /><path d="M15.500 3H19a3.700 3.700 0 0 1 0 7.500h-3.500z" fill="#ff7262" /><path d="M11 10.500h4.500V18H11a3.700 3.700 0 0 1 0-7.500z" fill="#a259ff" /><circle cx="19" cy="14.300" r="3.700" fill="#1abcfe" /><path d="M11 18h4.500v3.800A3.900 3.900 0 1 1 11 18z" fill="#0acf83" /></I>],
  ['drawio', false, <I><rect width="30" height="30" rx="1" fill="#f08705" /><path d="M19 5l11 11v14H14l-9-6z" fill="#df6c0c" /><path d="m15 8-7 13M15 8l7 13" stroke="#fff" strokeWidth="2" /><rect x="10.500" y="4" width="9" height="8" rx="1" fill="#fff" /><rect x="4" y="17" width="9" height="8" rx="1" fill="#fff" /><rect x="17" y="17" width="9" height="8" rx="1" fill="#fff" /></I>],
  ['whatsapp', false, <I><path d="M2 28 4 21A13 13 0 1 1 9 26z" fill="#fff" /><path d="M4.500 25.500 6 21a11 11 0 1 1 3.500 3.200z" fill="#25b84c" /><path d="M11 8c-4 4 5 15 10 12 2-1 1-2 0-3l-2-1-2 2c-2-1-4-3-5-5l1.500-2L12 8z" fill="#fff" /></I>],
  ['utorrent', false, <I><circle cx="15" cy="15" r="15" fill="#76b543" /><path d="M5 9l5-1c1 4 1 11 4 11s4-4 3-12l5-.5c0 5 0 10 2 12 1 1 2 1 3 0-2 4-7 3-8 0-2 4-6 4-7 2l3 9c-5-1-6-10-7-20z" fill="#f2f2f2" /></I>],
  ['telegram', true, <I><circle cx="14" cy="14" r="13.500" fill="#27a0dc" /><path d="M5 14 22 7l-3 15-5-4-3 3v-4z" fill="#fff" /><rect x="12" y="18" width="18" height="12" rx="4" fill="#ea3a3a" /><text x="21" y="27.500" fontSize="9.500" fill="#fff" textAnchor="middle" fontFamily="Open Sans" textLength="15">..37</text></I>],
  ['discord', true, <I><circle cx="15" cy="15" r="15" fill="#5865f2" /><path d="M8 9c5-2 9-2 14 0 2 4 3 8 2 11-2 2-5 2-5 1H11c0 1-3 1-5-1-1-3 0-7 2-11z" fill="#fff" /><circle cx="12" cy="15" r="2" fill="#5865f2" /><circle cx="22" cy="22" r="8.500" fill="#ef5757" /><text x="22" y="26" fontSize="11" fill="#fff" textAnchor="middle" fontFamily="Open Sans">9+</text></I>],
  ['teams', true, <I><TeamsMark /></I>],
  ['xd', true, <XdBadge $size={30}>Xd</XdBadge>],
  ['binance', true, <I><rect width="30" height="30" rx="5" fill="#0b0e11" /><path d="M15 4l5.500 5.500L18 12l-3-3-3 3-2.500-2.500zM15 26l5.500-5.500L18 18l-3 3-3-3-2.500 2.500zM15 12.300l2.700 2.700-2.700 2.700-2.700-2.700zM6.500 12.300 9.200 15l-2.700 2.700L3.800 15zM23.500 12.300l2.700 2.700-2.700 2.700-2.700-2.700z" fill="#f3ba2f" /></I>],
];

const trayIcons = [
  <I s={18} v={18}><circle cx="9" cy="9" r="8" fill="#444" /><path d="M9 9c-2-4-6-2-6 0 0 3 4 3 6 0 2-4 6-2 6 0 0 3-4 3-6 0" fill="none" stroke="#e6e6e6" strokeWidth="2" /></I>,
  <I s={20} v={20}><rect width="20" height="20" fill="#16180f" /><path d="M2 10c4-6 11-6 14 0-4 6-11 6-14 0z" fill="#76b900" /><path d="M9 5h8v10H9z" fill="#5c9000" /><path d="M4 10c3-4 7-4 9 0-3 4-7 3-9 0z" fill="#16180f" stroke="#8fd014" /></I>,
  <I s={20} v={20}><path d="M1 19C2 9 9 2 19 1c-1 9-8 14-15 14z" fill="#9a5cc8" /><path d="M1 19 17 3" stroke="#d9b8ee" strokeWidth="1.300" /></I>,
  <I s={18} v={18}><ellipse cx="9" cy="9" rx="8.500" ry="9" fill="#3aae78" /><path d="M5 7c1-2 2-3 4-3" stroke="#a8e6c8" fill="none" /></I>,
  <I s={20} v={20}><rect x="6" y="0" width="8" height="15" rx="2" fill="#fff" /><path d="M4 12c0 6 12 6 12 0M10 17v3M6 19.500h8" stroke="#fff" fill="none" /></I>,
  <I s={20} v={20}><rect x="5" y="7" width="12.500" height="8" fill="#fff" /><rect x="3.500" y="5.500" width="15" height="11" fill="none" stroke="#fff" /><path d="M19.500 9v4M1.500 2v3M4.500 2v3M0 4.500h6v2c0 3-6 3-6 0zM3 9v4" stroke="#fff" fill="none" /></I>,
  <I s={20}><TeamsMark /></I>,
  <I s={18} v={18}><path d="M2 16C2 8 8 2 16 2M6 16c0-5 4-10 10-10" stroke="#8b939c" fill="none" strokeWidth="1.300" /><path d="M9 16c0-4 3-7 7-7M13 16c0-2 1-3 3-3" stroke="#fff" fill="none" strokeWidth="1.400" /><circle cx="15.500" cy="15.500" r="1.300" fill="#fff" /></I>,
  <I s={20} v={20}><path d="M1 7h3l4-4v14l-4-4H1z" fill="none" stroke="#fff" strokeWidth="1.300" /><path d="M10 7.500c2 1 2 4 0 5" stroke="#fff" fill="none" strokeWidth="1.300" /><path d="M13 5c3 3 3 7 0 10M16 3c4 4 4 10 0 14" stroke="#8b939c" fill="none" strokeWidth="1.200" /></I>,
  <I s={20} v={20}><circle cx="9.500" cy="9.500" r="9.500" fill="#27a0dc" /><path d="M3 10 14 5l-2 9-4-3z" fill="#fff" /><circle cx="15" cy="15" r="5" fill="#ea3a3a" /><text x="15" y="18" fontSize="7" fill="#fff" textAnchor="middle" fontFamily="Open Sans">.7</text></I>,
  <I s={20} v={20}><rect width="20" height="20" rx="4" fill="#1c72d8" /><path d="M4 9l2-5h8l2 5v7h-2v-2H6v2H4z" fill="#fff" /><path d="M6.500 8.500 7.500 6h5l1 2.500z" fill="#1c72d8" /><circle cx="6.500" cy="11.500" r="1" fill="#1c72d8" /><circle cx="13.500" cy="11.500" r="1" fill="#1c72d8" /></I>,
];

export default function App() {
  return (
    <Window>
      <Global />
      <TitleBar>
        <XdBadge $size={20}>Xd</XdBadge>
        <MenuBar>
          {[['Файл', 35], ['Правка', 50], ['Объект', 50], ['Плагины', 59], ['Посмотреть', 82], ['Окно', 36], ['Справка', 58]].map(([t, w]) => (
            <MenuItem key={t} $w={w} $track={-0.32}>{t}</MenuItem>
          ))}
        </MenuBar>
        <WindowButtons>
          <svg width="14" height="14" viewBox="0 0 14 14"><path d="M1 6.500h12" stroke="#222" /></svg>
          <svg width="14" height="14" viewBox="0 0 14 14" fill="none" stroke="#222"><path d="M1.500 3.500h9v9h-9zM3.500 3.500v-2h9v9h-2" /></svg>
          <svg width="14" height="14" viewBox="0 0 14 14"><path d="m1 1 12 12M13 1 1 13" stroke="#222" /></svg>
        </WindowButtons>
      </TitleBar>

      <Toolbar>
        <svg width="20" height="20" viewBox="0 0 20 20"><path d="M10 1 20 11h-2.500v8H12v-6H8v6H2.500v-8H0z" fill="#666" /></svg>
        <Tabs>
          <Tab $w={98} $track={-0.05}>Оформление</Tab>
          <Tab $w={72} $on $track={-0.05}>Прототип</Tab>
          <Tab $w={146} $track={-0.15}>Совместный доступ</Tab>
        </Tabs>
        <DocTitle><span>Без имени — 10 апреля, 00.03.42 (1)</span><Chevron color="#b3b3b3" w={1.5} /></DocTitle>
        <ToolbarRight>
          <Share>
            <svg width="21" height="20" viewBox="0 0 21 20" fill="none" stroke="#666">
              <path d="M18 10.500A8.500 8.500 0 1 0 13 17.600" strokeWidth="1.500" />
              <path d="M4 15.500c.5-1.800 2-2.300 3.500-2.800v-1.500C6 10 5.300 8.500 5.300 6.800c0-2.500 1.500-4.300 4.200-4.300s4.200 1.800 4.200 4.300c0 1.700-.7 3.200-2.200 4.400v1.500l2 .8" strokeWidth="2" />
              <path d="M17 12.500v7M13.500 16h7" strokeWidth="1.400" />
            </svg>
          </Share>
          <Device>
            <svg width="13" height="19" viewBox="0 0 12 19" preserveAspectRatio="none"><path fillRule="evenodd" d="M2 0h8a2 2 0 0 1 2 2v15a2 2 0 0 1-2 2H2a2 2 0 0 1-2-2V2a2 2 0 0 1 2-2zM1.800 2.500v12h8.400v-12zM5 15.800v1.700h2v-1.700z" fill="#666" /></svg>
          </Device>
          <Play><svg width="16" height="18" viewBox="0 0 16 18"><path d="M0 1l16 8-16 8z" fill="#666" /></svg></Play>
          <Zoom>15,7 %<Chevron color="#666" w={1.800} /></Zoom>
        </ToolbarRight>
      </Toolbar>

      <Work>
        <ToolRail>
          <Tool><svg width="14" height="21" viewBox="0 0 14 21"><path d="M0 0l14 13H7l-7 7.500z" fill="#1592e6" /></svg></Tool>
          <Tool><svg width="20" height="20" viewBox="0 0 20 20" fill="none" stroke="#666"><circle cx="8.500" cy="8.500" r="7" strokeWidth="1.800" /><path d="m13.500 13.500 5 5" strokeWidth="2.400" /></svg></Tool>
          <Spacer />
          <Tool><svg width="19" height="19" viewBox="0 0 19 19" fill="none" stroke="#666" strokeWidth="1.800"><path d="M4 1.500h13.500v13H4zM4 1.500H1.500v16H15v-3" /><path d="M9.500 2h5v6.500L12 6.500 9.500 8.500z" fill="#666" stroke="none" /></svg></Tool>
          <Tool><svg width="20" height="18" viewBox="0 0 20 18" fill="#666"><path d="M10 0l10 6-10 6L0 6z" /><path d="m2 9.500 8 5 8-5 2 1.500-10 6.500L0 11z" /></svg></Tool>
          <Tool><svg width="22" height="18" viewBox="0 0 22 18" fill="#666"><path d="M0 5h2V1h7v4h4V1h7v4h2v12H0z" /></svg></Tool>
        </ToolRail>

        <Canvas>
          <Login x={408} login="Login" pass="Password" dim={[1, 1]} />
          <Login x={527.3} login="|" pass="Password" dim={[0, 1]} keyboard />
          <Login x={646.700} login="m_boldachev@kbtu.kz" pass="Password" dim={[0, 1]} keyboard />
          <Login x={765.700} login="m_boldachev@kbtu.kz" pass="|" dim={[0, 1]} keyboard />
          <Login x={885.300} login="m_boldachev@kbtu.kz" pass="········" keyboard />
          <MainMenu x={611.300} modal />
          <MainMenu x={749.300} />
          <Home x={885.300} y={522} />
          <Home x={1162.300} y={402} mode="typing" />
          <Home x={1162.300} y={612.700} mode="results" />
          <ProfilePage />
          <Home x={885.500} y={771} h={593} tall />
          <EventsPage />
        </Canvas>

        <Inspector>
          <Section $h={181}>
            <SectionHead $mt={18} $indent={5}>
              <SectionTitle $w={131} $track={1.7}>ВЗАИМОДЕЙСТВИЕ</SectionTitle><Info />
              <PlusSlot><svg width="11" height="11" viewBox="0 0 11 11"><path d="M5.500 0v11M0 5.500h11" stroke="#666" strokeWidth="1.300" /></svg></PlusSlot>
            </SectionHead>
            <FieldLabel $mt={37}>Триггер</FieldLabel>
            <Select>Касание<Chevron /></Select>
          </Section>
          <Section $h={506}>
            <SectionHead $mt={22}><SectionTitle $w={71} $track={1.7}>ДЕЙСТВИЕ</SectionTitle><Info /></SectionHead>
            <FieldLabel $mt={38}>Тип</FieldLabel>
            <Select>Переход<Chevron /></Select>
            <CheckRow><Box />Сохранить позицию прокрутки</CheckRow>
            <FieldLabel $mt={14}>Место назначения</FieldLabel>
            <Select>(Выберите место назначения)<Chevron /></Select>
            <FieldLabel $mt={20}>Анимация</FieldLabel>
            <Select>Растворение<Chevron /></Select>
            <InlineRow $mt={20} $pr={13} $track={-0.5}>
              Смягчение
              <InlineValue $w={214} $track={-0.42}><Clip $w={188}>Анимация: медленно с ускорением</Clip><Chevron /></InlineValue>
            </InlineRow>
            <InlineRow $mt={21} $pr={14} $track={-0.55}>
              Длительность
              <InlineValue $w={74} $track={-0.2}>0,2 с<Chevron /></InlineValue>
            </InlineRow>
          </Section>
        </Inspector>
      </Work>

      <TaskBar>
        <Slot $w={60}><I s={20} v={20}><path d="M0 3l9-1.300V9.500H0zM10 1.500 20 0v9.500H10zM0 10.500h9v7.800L0 17zM10 10.500h10V20l-10-1.500z" fill="#fff" /></I></Slot>
        <Slot $w={60}><I s={20} v={20}><circle cx="12" cy="7.500" r="6.700" fill="none" stroke="#fff" strokeWidth="1.300" /><path d="M7.500 12.500.500 19.500" stroke="#fff" strokeWidth="1.500" /></I></Slot>
        <Slot $w={62}><I s={20} v={20}><path d="M.5.500v3h13v-3M.5 19.500v-3h13v3M.5 6h13v8H.5zM18.500 0v5M18.500 11v9" stroke="#fff" fill="none" strokeWidth="1.100" /><path d="M17 7h3v3h-3z" fill="#fff" /></I></Slot>
        {apps.map(([k, run, art], i) => <Slot key={k} $w={i < 16 ? 52.15 : 50.6} $run={run} $on={k === 'xd'}>{art}</Slot>)}
        <Tray>
          <Weather>
            <svg width="28" height="20" viewBox="0 0 28 20"><path d="M6 20a6 6 0 0 1 0-12 8 8 0 0 1 15-1 6.500 6.500 0 0 1 1 13z" fill="#b9dcf5" /><path d="M6 9a8 8 0 0 1 15-2c-5 0-4 5-8 5-3-3-6-2-7-3z" fill="#e9f5fd" /></svg>
            12°C
          </Weather>
          {trayIcons.map((t, i) => <TrayCell key={i}>{t}</TrayCell>)}
          <Lang>РУС</Lang>
          <Clock>21:47<br />10.04.2022</Clock>
          <Notice>
            <svg width="36" height="36" viewBox="0 0 36 36">
              <path d="M2 4h20v17H7l-5 0z" fill="#fff" /><path d="M6 9h12M6 13h12M6 17h7" stroke="#23282e" strokeWidth="1.300" />
              <circle cx="21" cy="24" r="11.500" fill="#3b4148" stroke="#8d9298" />
              <text x="21" y="29" fontSize="14" fontWeight="600" textAnchor="middle" fill="#fff" fontFamily="Open Sans">20</text>
            </svg>
          </Notice>
        </Tray>
      </TaskBar>
    </Window>
  );
}
